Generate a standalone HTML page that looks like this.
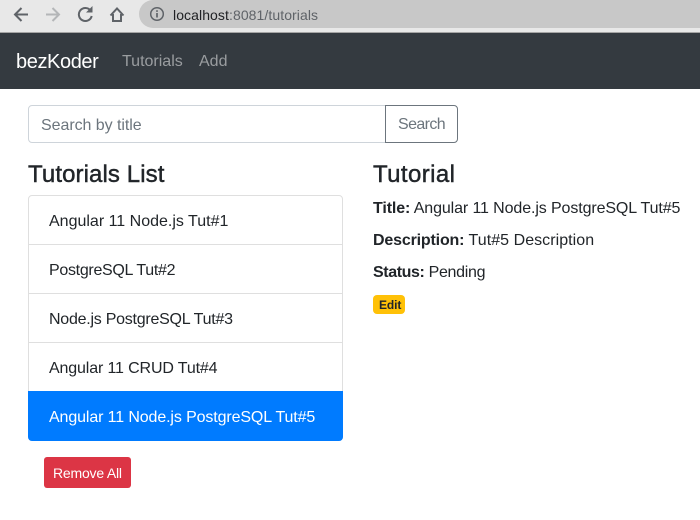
<!DOCTYPE html>
<html><head><meta charset="utf-8"><style>
html,body{margin:0;padding:0;width:700px;height:520px;overflow:hidden;background:#fff;font-family:"Liberation Sans",sans-serif;color:#212529}
.a{position:absolute;white-space:nowrap}
.h{font-size:24px;line-height:29px;font-weight:400;color:#212529;-webkit-text-stroke:.45px #212529}
#chrome{position:absolute;left:0;top:0;width:700px;height:32px;background:#e8e8e8;border-bottom:1px solid #a5a5a5}
#pill{position:absolute;left:139px;top:0;width:561px;height:28px;background:#c8c8c8;border-radius:14px 0 0 14px}
#nav{position:absolute;left:0;top:33px;width:700px;height:56px;background:#343a40}
#input{position:absolute;left:28px;top:105px;width:358px;height:38px;box-sizing:border-box;border:1px solid #ced4da;border-radius:4px 0 0 4px}
#btn{position:absolute;left:385px;top:105px;width:73px;height:38px;box-sizing:border-box;border:1px solid #6c757d;border-radius:0 4px 4px 0;background:#fff}
#list{position:absolute;left:28px;top:195px;width:315px;height:246px;box-sizing:border-box;border:1px solid #dfdfdf;border-radius:4px;overflow:hidden}
.sep{position:absolute;left:0;width:315px;height:1px;background:#dfdfdf}
#act{position:absolute;left:28px;top:391px;width:315px;height:50px;background:#007bff;border-radius:0 0 4px 4px}
#rem{position:absolute;left:44px;top:457px;width:87px;height:31px;background:#dc3545;border-radius:3px}
#edit{position:absolute;left:373px;top:295px;width:32px;height:19px;background:#ffc107;border-radius:4px}
</style></head><body>
<div id="chrome"></div>
<div id="pill"></div>
<svg class="a" style="left:0;top:0" width="140" height="32" viewBox="0 0 140 32" fill="none">
<path d="M28 14.500H15.500M21.500 8L15 14.500L21.500 21" stroke="#5f6368" stroke-width="2"/>
<path d="M46 14.500H58.500M52.500 8L59 14.500L52.500 21" stroke="#b4b6b8" stroke-width="2"/>
<path d="M90.500 10.500A6.500 6.500 0 1 0 91.700 16" stroke="#5f6368" stroke-width="2"/>
<path d="M86 12.500H92.500V6z" fill="#5f6368"/>
<path d="M110.500 15.500L117 8.500L123.500 15.500M113 14V21H121V14" stroke="#5f6368" stroke-width="2"/>
</svg>
<svg class="a" style="left:149px;top:6px" width="16" height="16" viewBox="0 0 16 16" fill="none">
<circle cx="8" cy="8" r="6.300" stroke="#5f6368" stroke-width="1.500"/>
<path d="M8 7V11.500M8 4.300V5.900" stroke="#5f6368" stroke-width="1.700"/>
</svg>
<div class="a" style="left:173px;top:7px;font-size:14px;line-height:16px;color:#202124;letter-spacing:.08px">localhost<span style="color:#5f6368">:8081/tutorials</span></div>

<div id="nav"></div>
<div class="a" style="left:16px;top:50px;font-size:20px;line-height:24px;color:#fff;letter-spacing:-.4px">bezKoder</div>
<div class="a" style="left:122px;top:52px;font-size:16px;line-height:20px;color:#9a9da0">Tutorials</div>
<div class="a" style="left:199px;top:52px;font-size:16px;line-height:20px;color:#9a9da0">Add</div>

<div id="input"></div>
<div class="a" style="left:41px;top:116px;font-size:16px;line-height:20px;color:#6c757d;letter-spacing:-.05px">Search by title</div>
<div id="btn"></div>
<div class="a" style="left:398px;top:115px;font-size:16px;line-height:20px;color:#6c757d;letter-spacing:-.6px">Search</div>

<div class="a h" style="left:28px;top:160px;letter-spacing:.1px">Tutorials List</div>
<div class="a h" style="left:373px;top:160px;letter-spacing:.4px">Tutorial</div>

<div id="list">
<div class="sep" style="top:48px"></div>
<div class="sep" style="top:97px"></div>
<div class="sep" style="top:146px"></div>
</div>
<div id="act"></div>
<div class="a" style="left:49px;top:212px;font-size:16px;line-height:20px">Angular 11 Node.js Tut#1</div>
<div class="a" style="left:49px;top:261px;font-size:16px;line-height:20px;letter-spacing:-.3px">PostgreSQL Tut#2</div>
<div class="a" style="left:49px;top:310px;font-size:16px;line-height:20px;letter-spacing:-.25px">Node.js PostgreSQL Tut#3</div>
<div class="a" style="left:49px;top:359px;font-size:16px;line-height:20px;letter-spacing:-.14px">Angular 11 CRUD Tut#4</div>
<div class="a" style="left:49px;top:408px;font-size:16px;line-height:20px;color:#fff;letter-spacing:-.12px">Angular 11 Node.js PostgreSQL Tut#5</div>

<div id="rem"></div>
<div class="a" style="left:53px;top:464px;font-size:14px;line-height:18px;color:#fff;letter-spacing:-.2px">Remove All</div>

<div class="a" style="left:373px;top:199px;font-size:16px;line-height:20px;letter-spacing:-.11px"><b>Title:</b> Angular 11 Node.js PostgreSQL Tut#5</div>
<div class="a" style="left:373px;top:231px;font-size:16px;line-height:20px;letter-spacing:.05px"><b style="letter-spacing:-.17px">Description:</b> Tut#5 Description</div>
<div class="a" style="left:373px;top:263px;font-size:16px;line-height:20px;letter-spacing:-.3px"><b style="letter-spacing:-.4px">Status:</b> Pending</div>
<div id="edit"></div>
<div class="a" style="left:379px;top:298px;font-size:12px;line-height:14px;font-weight:700;color:#212529;letter-spacing:-.1px">Edit</div>
</body></html>
